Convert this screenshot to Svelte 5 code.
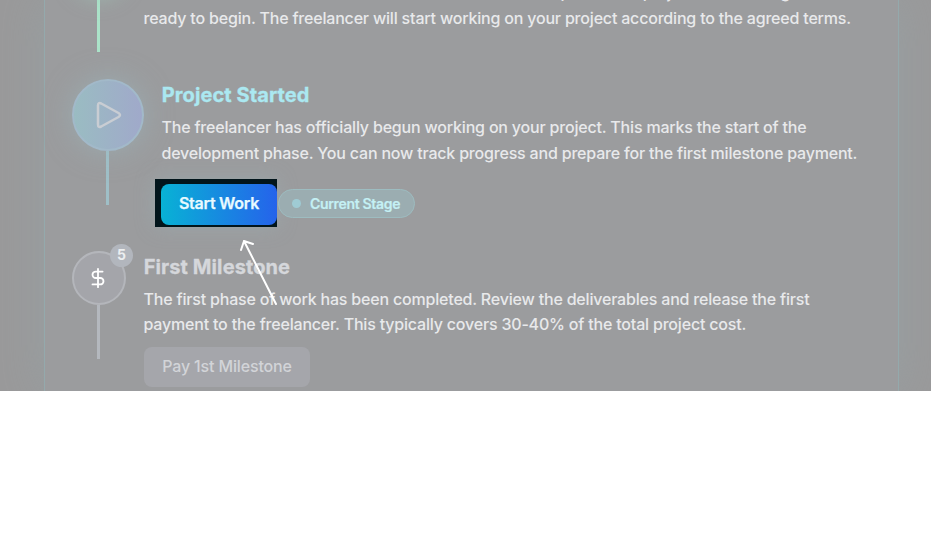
<script>
  const steps = [
    {
      id: 'approved', tone: 'done', title: '',
      lines: ['The contract has been reviewed and all the funds are in place. The project has been agreed', 'ready to begin. The freelancer will start working on your project according to the agreed terms.']
    },
    {
      id: 'started', tone: 'current', title: 'Project Started',
      lines: ['The freelancer has officially begun working on your project. This marks the start of the', 'development phase. You can now track progress and prepare for the first milestone payment.']
    },
    {
      id: 'first', tone: 'pending', title: 'First Milestone',
      lines: ['The first phase of work has been completed. Review the deliverables and release the first', 'payment to the freelancer. This typically covers 30-40% of the total project cost.']
    }
  ];
</script>

<main class="shot">
  <section class="panel">
    {#each steps as step (step.id)}
      <article class="step {step.tone}">
        <div class="rail">
          <div class="circle">
            {#if step.tone === 'current'}
              <svg class="play" viewBox="0 0 30 30"><path d="M5 5.5Q5 2 8.2 3.5L25.5 13Q28.5 15 25.5 17L8.2 26.5Q5 28 5 24.5Z" /></svg>
            {:else if step.tone === 'pending'}
              <svg class="dollar" viewBox="0 0 24 24"><path d="M12 2v20M17 5H9.5a3.5 3.5 0 0 0 0 7h5a3.5 3.5 0 0 1 0 7H6" /></svg>
              <span class="count">5</span>
            {/if}
          </div>
          <div class="stem"></div>
        </div>
        <div class="body">
          {#if step.title}<h3>{step.title}</h3>{/if}
          <p>{#each step.lines as line}<span class="line">{line}</span>{/each}</p>
          {#if step.tone === 'current'}
            <div class="actions">
              <div class="spot"><button class="start">Start Work</button></div>
              <div class="stage"><i></i>Current Stage</div>
            </div>
          {:else if step.tone === 'pending'}
            <button class="pay">Pay 1st Milestone</button>
          {/if}
        </div>
      </article>
    {/each}
  </section>
  <svg class="arrow" viewBox="0 0 50 75"><path d="M41 69 9 6M6 15 9 6l9 3" /></svg>
</main>

<style>
  :global(body) { background: #fff; }
  .shot {
    position: relative;
    box-sizing: border-box;
    width: 931px;
    height: 391px;
    padding: 0 32px 0 44px;
    overflow: hidden;
    background: #9a9a9b;
    font-family: Inter, "Liberation Sans", sans-serif;
  }
  .panel {
    box-sizing: border-box;
    height: 391px;
    border: solid #94a9ac;
    border-width: 0 1px;
    padding-left: 27px;
    background: #9b9c9e;
    box-shadow: 0 0 42px rgba(149, 166, 169, .5);
  }
  .step { display: flex; }
  .rail { display: flex; flex-direction: column; align-items: flex-start; }
  .circle {
    position: relative;
    box-sizing: border-box;
    display: grid;
    place-items: center;
    flex: none;
    width: 54px;
    height: 54px;
    border: 2px solid #b4b6bb;
    border-radius: 50%;
    background: #a4a5aa;
  }
  .stem { width: 3px; height: 54px; margin-left: 25px; background: #b4b8be; }
  svg { fill: none; stroke-linecap: round; stroke-linejoin: round; }
  h3 { margin: 0 0 0 -.3px; font-size: 20px; line-height: 28px; font-weight: 700; letter-spacing: .1px; -webkit-text-stroke: .3px currentColor; }
  p { margin: 0 0 0 -.5px; color: #e8e9eb; font-size: 16px; line-height: 25.5px; font-weight: 500; letter-spacing: -.19px; }
  .line { display: block; width: max-content; }
  button { border: 0; font: 600 16px/24px Inter, sans-serif; }

  .done { height: 79px; }
  .done .rail { margin-top: -56px; }
  .done .circle { border-color: #a5dcc3; background: #a0c3b3; box-shadow: 0 0 20px rgba(160, 205, 187, .6); }
  .done .stem { background: #abe3c9; }
  .done .body { margin: -20px 0 0 18px; }

  .current { height: 172px; }
  .current .circle {
    width: 72px;
    height: 72px;
    border-color: #a2b9c9;
    background: linear-gradient(90deg, #9abcc2, #a0a9ca);
    box-shadow: 0 0 28px rgba(155, 182, 188, .6);
  }
  .current .stem { margin-left: 34px; background: #9fbfc7; }
  .current .body { margin: 2px 0 0 18px; }
  .current h3 { color: #abe8f1; }
  .current p { padding-top: 6px; }
  .play { width: 30px; height: 30px; stroke: #c9cdd3; stroke-width: 2.5; }
  .actions { display: flex; align-items: flex-start; margin: 13px 0 0 -7px; }
  .spot {
    box-sizing: border-box;
    width: 122px;
    height: 48px;
    padding: 5px 0 0 6px;
    background: #02151b;
    box-shadow: 0 0 20px rgba(155, 182, 188, .4);
  }
  .start {
    display: block;
    width: 116px;
    height: 41px;
    padding: 0 0 3px;
    border-radius: 8px;
    background: linear-gradient(90deg, #08b2d5, #2563eb);
    color: #e8faff;
    letter-spacing: -.25px;
    -webkit-text-stroke: .25px #e8faff;
  }
  .stage {
    box-sizing: border-box;
    display: flex;
    align-items: center;
    width: 137px;
    height: 29px;
    margin: 10px 0 0 1px;
    padding-left: 13px;
    border: 1px solid #9dbcc0;
    border-radius: 15px;
    background: #9badb1;
    color: #c4f0f4;
    font-size: 14px;
    font-weight: 600;
    letter-spacing: -.32px;
    -webkit-text-stroke: .2px #c4f0f4;
  }
  .stage i { width: 9px; height: 9px; margin-right: 9px; border-radius: 50%; background: #9fcbd4; }

  .pending .body { margin: 2px 0 0 18px; }
  .pending h3 { color: #d5d7db; }
  .pending p { padding-top: 6px; line-height: 25px; }
  .dollar { width: 22px; height: 22px; margin: -1px 0 0 -2px; stroke: #fff; stroke-width: 2; }
  .count {
    position: absolute;
    top: -9px;
    right: -9px;
    width: 23px;
    height: 23px;
    border-radius: 50%;
    background: #b2b6bd;
    color: #eceef0;
    font-size: 14px;
    font-weight: 700;
    line-height: 22px;
    text-align: center;
  }
  .pay {
    display: block;
    width: 166px;
    height: 40px;
    margin-top: 10px;
    padding: 0 0 2px;
    border-radius: 8px;
    background: #a5a6ab;
    color: #d2d4d8;
    font-weight: 500;
    letter-spacing: -.15px;
  }
  .arrow { position: absolute; left: 235px; top: 235px; width: 50px; height: 75px; stroke: #fff; stroke-width: 2; }
</style>
